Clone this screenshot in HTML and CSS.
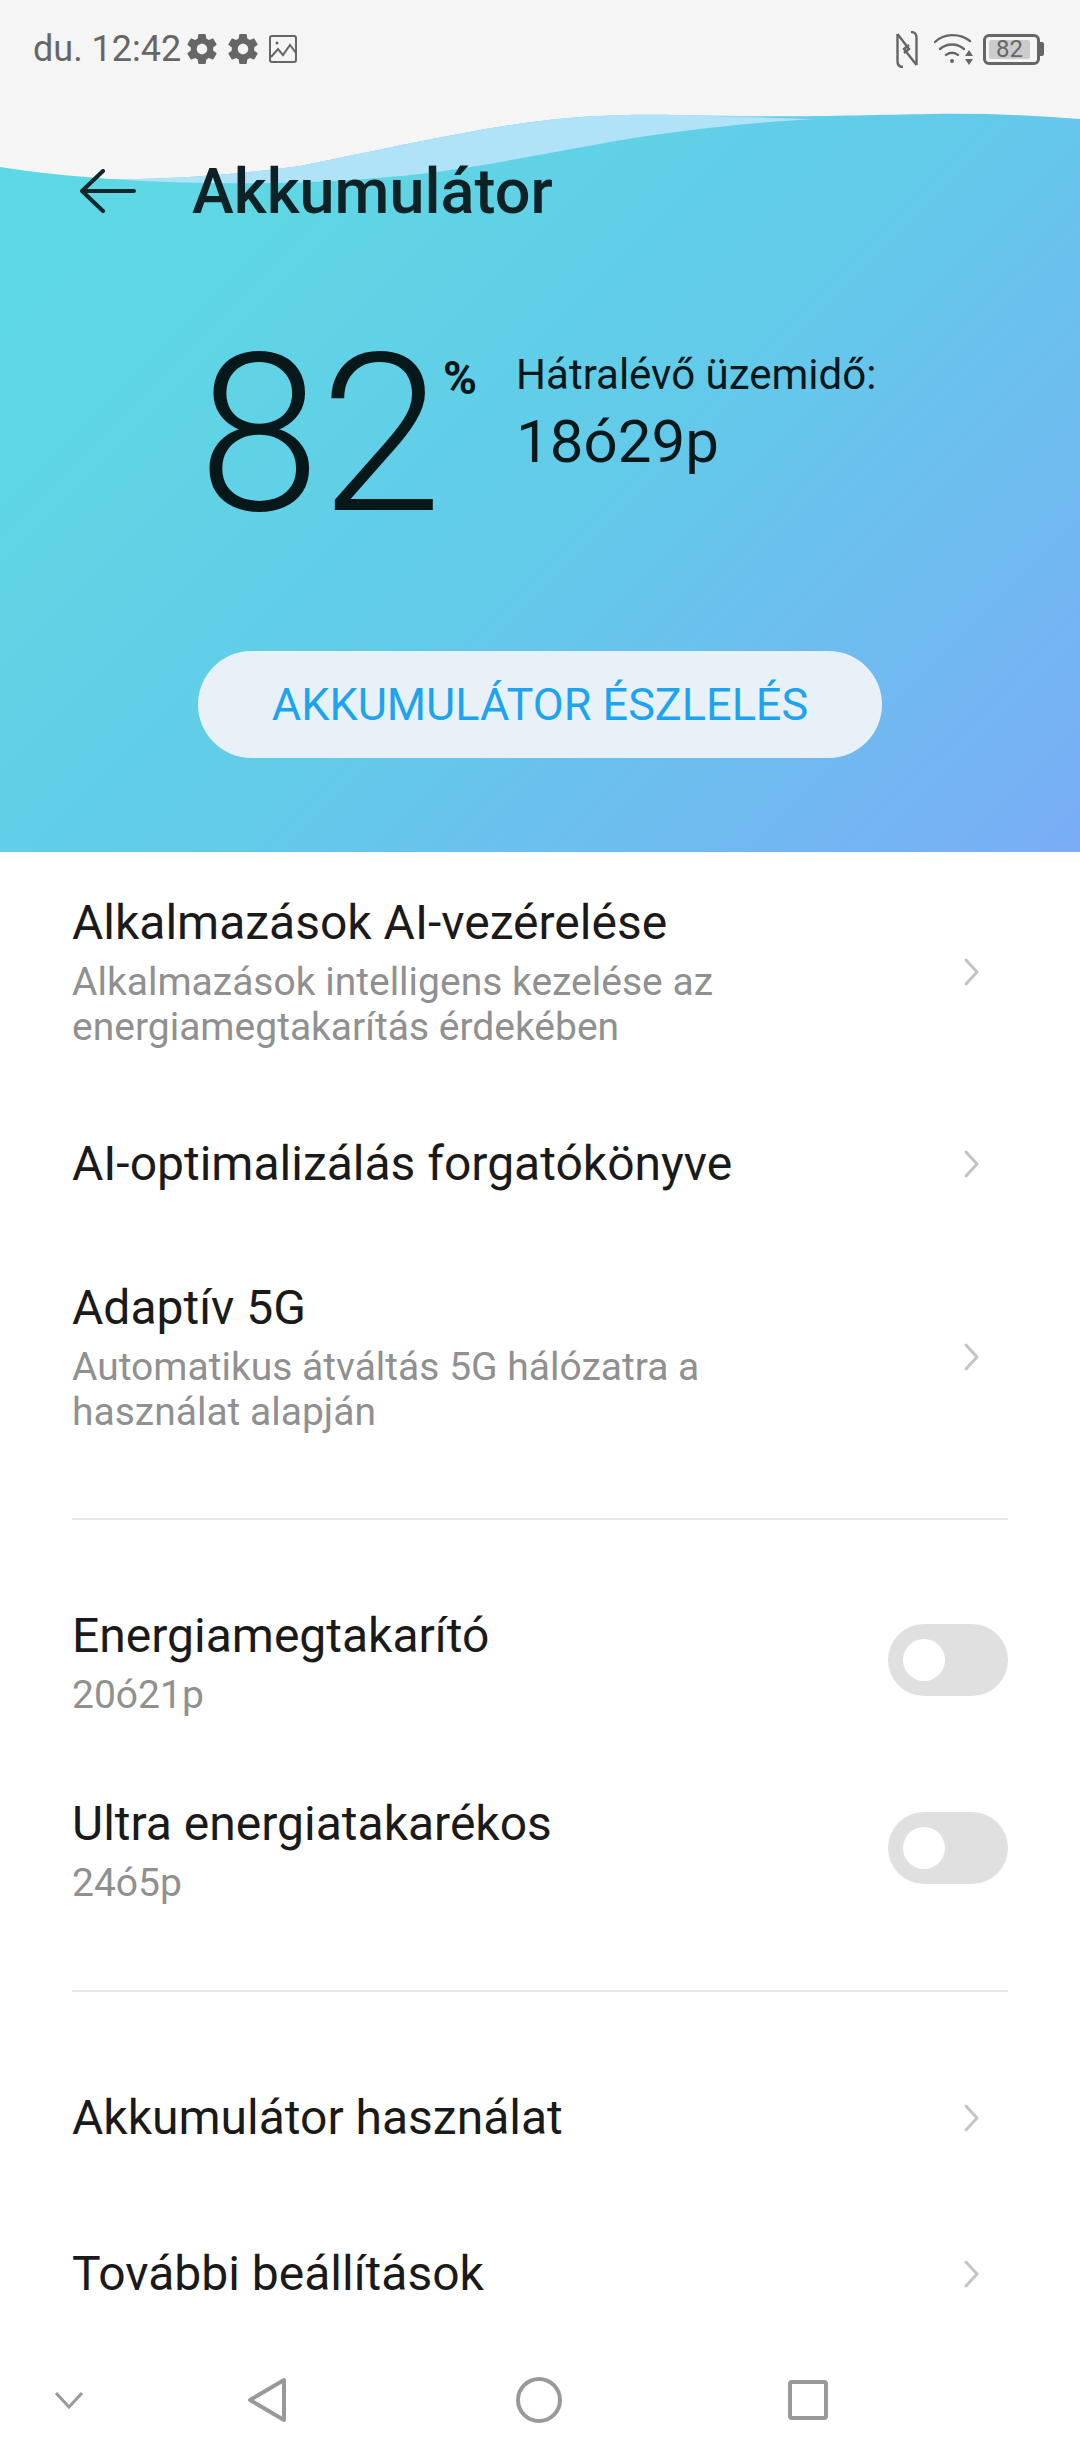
FILE: index.html
```html
<!DOCTYPE html>
<html lang="en">
<head>
    <meta charset="UTF-8">
    <title>Akkumulátor</title>
    <link rel="stylesheet" href="styles.css">
</head>
<body>
    <svg class="defs" width="0" height="0">
        <symbol id="gear" viewBox="0 0 24 24">
            <path d="M19.43 12.98c.04-.32.07-.64.07-.98s-.03-.66-.07-.98l2.11-1.65c.19-.15.24-.42.12-.64l-2-3.46c-.12-.22-.39-.3-.61-.22l-2.49 1c-.52-.4-1.08-.73-1.69-.98l-.38-2.65C14.46 2.18 14.25 2 14 2h-4c-.25 0-.46.18-.49.42l-.38 2.65c-.61.25-1.17.59-1.69.98l-2.49-1c-.23-.09-.49 0-.61.22l-2 3.46c-.13.22-.07.49.12.64l2.11 1.65c-.04.32-.07.65-.07.98s.03.66.07.98l-2.11 1.65c-.19.15-.24.42-.12.64l2 3.46c.12.22.39.3.61.22l2.49-1c.52.4 1.08.73 1.69.98l.38 2.65c.03.24.24.42.49.42h4c.25 0 .46-.18.49-.42l.38-2.65c.61-.25 1.17-.59 1.69-.98l2.49 1c.23.09.49 0 .61-.22l2-3.46c.12-.22.07-.49-.12-.64l-2.11-1.65zM12 15.5c-1.93 0-3.5-1.57-3.5-3.5s1.57-3.5 3.5-3.5 3.5 1.57 3.5 3.5-1.57 3.5-3.5 3.5z"/>
        </symbol>
        <symbol id="chevron" viewBox="0 0 18 30">
            <path d="M3 3l11 12L3 27" fill="none" stroke="#c4c4c4" stroke-width="3" stroke-linecap="round" stroke-linejoin="round"/>
        </symbol>
    </svg>

    <div class="page">
        <section class="hero">
            <svg class="wave" viewBox="0 0 1080 852" width="1080" height="852">
                <path fill="#f5f5f5" d="M0 0H1080V119C1030 115 980 113 930 114C860 115 790 118 680 115C620 114 580 116 540 121C480 128 400 146 300 166C240 174 170 180 110 179C70 176 30 172 0 167Z"/>
                <path fill="#b0e2f8" d="M110 179C170 180 240 174 300 166C400 146 480 128 540 121C580 116 620 114 680 115C730 116 770 118 815 119C760 122 710 127 640 137C590 145 500 163 450 170C370 182 240 188 110 179Z"/>
            </svg>

            <div class="status-bar">
                <span class="clock">du. 12:42</span>
                <svg class="gear" width="36" height="36"><use href="#gear"/></svg>
                <svg class="gear" width="36" height="36"><use href="#gear"/></svg>
                <svg class="pic" width="28" height="28" viewBox="0 0 28 28" fill="none" stroke="#666" stroke-width="2">
                    <rect x="1" y="1" width="26" height="26" rx="2"/>
                    <path d="M2 22l7-8 5 6 7-10 6 8"/>
                    <circle cx="8" cy="8" r="1.5" fill="#666" stroke="none"/>
                </svg>
                <span class="spacer"></span>
                <svg class="nfc" width="22" height="37" viewBox="0 0 22 37" fill="none" stroke="#666" stroke-width="2.4">
                    <path d="M1.5 3V30C1.5 34 3 36 7 36"/>
                    <path d="M1.5 3L13 18L8 22"/>
                    <path d="M20.500 34V7C20.500 3 19 1 15 1"/>
                    <path d="M20.500 34L8 18L13 14"/>
                </svg>
                <svg class="wifi" width="40" height="32" viewBox="0 0 40 32" fill="none" stroke="#666" stroke-width="2.4" stroke-linecap="round">
                    <path d="M1 9C10 0 26 0 36 8"/>
                    <path d="M6 16C13 10 23 10 30 16"/>
                    <path d="M12 22C15 19 21 19 24 22"/>
                    <circle cx="18" cy="28" r="2" fill="#666" stroke="none"/>
                    <path d="M35 17l4 6h-8zM35 32l4-6h-8z" fill="#666" stroke="none"/>
                </svg>
                <div class="battery">
                    <div class="battery-level">82</div>
                </div>
                <div class="battery-tip"></div>
            </div>

            <header class="title-row">
                <svg class="back" width="56" height="44" viewBox="0 0 56 44" fill="none" stroke="#10272c" stroke-width="4" stroke-linecap="round" stroke-linejoin="round">
                    <path d="M54 22H2M23 2L2 22l21 20"/>
                </svg>
                <h1 class="title">Akkumulátor</h1>
            </header>

            <div class="summary">
                <div class="level">82</div>
                <div class="percent">%</div>
                <div class="remaining">
                    <div class="remaining-label">Hátralévő üzemidő:</div>
                    <div class="remaining-value">18ó29p</div>
                </div>
            </div>

            <button class="detect">AKKUMULÁTOR ÉSZLELÉS</button>
        </section>

        <main class="list">
            <div class="row">
                <div class="row-text">
                    <div class="row-title">Alkalmazások AI-vezérelése</div>
                    <div class="row-sub">Alkalmazások intelligens kezelése az<br>energiamegtakarítás érdekében</div>
                </div>
                <svg class="chevron" width="18" height="30"><use href="#chevron"/></svg>
            </div>
            <div class="row">
                <div class="row-text">
                    <div class="row-title">AI-optimalizálás forgatókönyve</div>
                </div>
                <svg class="chevron" width="18" height="30"><use href="#chevron"/></svg>
            </div>
            <div class="row">
                <div class="row-text">
                    <div class="row-title">Adaptív 5G</div>
                    <div class="row-sub">Automatikus átváltás 5G hálózatra a<br>használat alapján</div>
                </div>
                <svg class="chevron" width="18" height="30"><use href="#chevron"/></svg>
            </div>

            <hr class="divider">

            <div class="row row-switch">
                <div class="row-text">
                    <div class="row-title">Energiamegtakarító</div>
                    <div class="row-sub">20ó21p</div>
                </div>
                <div class="switch"><div class="knob"></div></div>
            </div>
            <div class="row row-switch">
                <div class="row-text">
                    <div class="row-title">Ultra energiatakarékos</div>
                    <div class="row-sub">24ó5p</div>
                </div>
                <div class="switch"><div class="knob"></div></div>
            </div>

            <hr class="divider divider-after-switch">

            <div class="row row-link">
                <div class="row-text">
                    <div class="row-title">Akkumulátor használat</div>
                </div>
                <svg class="chevron" width="18" height="30"><use href="#chevron"/></svg>
            </div>
            <div class="row row-link">
                <div class="row-text">
                    <div class="row-title">További beállítások</div>
                </div>
                <svg class="chevron" width="18" height="30"><use href="#chevron"/></svg>
            </div>
        </main>

        <nav class="nav">
            <svg class="nav-hide" width="30" height="18" viewBox="0 0 30 18" fill="none" stroke="#999" stroke-width="3">
                <path d="M2 2l13 14L28 2"/>
            </svg>
            <svg class="nav-back" width="40" height="46" viewBox="0 0 40 46" fill="none" stroke="#999" stroke-width="4" stroke-linejoin="round">
                <path d="M37 3V43L3 23Z"/>
            </svg>
            <svg class="nav-home" width="46" height="46" viewBox="0 0 46 46" fill="none" stroke="#999" stroke-width="4">
                <circle cx="23" cy="23" r="21"/>
            </svg>
            <svg class="nav-recent" width="40" height="40" viewBox="0 0 40 40" fill="none" stroke="#999" stroke-width="4" stroke-linejoin="round">
                <rect x="2" y="2" width="36" height="36" rx="2"/>
            </svg>
        </nav>
    </div>
</body>
</html>
```

FILE: styles.css
```css
* {
    box-sizing: border-box;
}

body {
    margin: 0;
    background: #fff;
    font-family: Roboto, sans-serif;
    color: #1a1a1a;
}

.defs {
    position: absolute;
}

.page {
    width: 1080px;
    height: 2460px;
    display: flex;
    flex-direction: column;
    overflow: hidden;
}

/* top blue area */
.hero {
    position: relative;
    height: 852px;
    flex-shrink: 0;
    background: linear-gradient(135deg, #5dd9e6 0%, #5fd6e4 25%, #62cbe9 55%, #7aadf6 100%);
    display: flex;
    flex-direction: column;
}

.wave {
    position: absolute;
    top: 0;
    left: 0;
}

.status-bar {
    position: relative;
    height: 98px;
    padding: 0 36px 0 33px;
    display: flex;
    align-items: center;
    color: #666;
}

.clock {
    font-size: 36px;
    margin-right: 3px;
}

.gear {
    fill: #666;
    margin-right: 5px;
}

.pic {
    margin-left: 3px;
}

.spacer {
    flex: 1;
}

.nfc {
    margin-right: 16px;
}

.wifi {
    margin-right: 9px;
}

.battery {
    width: 57px;
    height: 31px;
    border: 3px solid #666;
    border-radius: 6px;
    padding: 3px;
}

.battery-level {
    width: 41px;
    height: 19px;
    background: #ccc;
    border-radius: 2px;
    font-size: 24px;
    line-height: 19px;
    text-align: center;
}

.battery-tip {
    width: 4px;
    height: 14px;
    background: #666;
    border-radius: 0 2px 2px 0;
}

.title-row {
    position: relative;
    display: flex;
    align-items: center;
    margin-top: 45px;
    padding: 0 0 0 80px;
    height: 96px;
}

.title {
    margin: 0 0 0 56px;
    font-size: 63px;
    font-weight: 500;
    color: #0e2226;
}

.summary {
    position: relative;
    display: flex;
    align-items: flex-start;
    padding: 112px 0 0 198px;
    height: 412px;
    color: #07181b;
}

.level {
    font-size: 220px;
    font-weight: 300;
    line-height: 220px;
    margin-top: -26px;
}

.percent {
    font-size: 46px;
    font-weight: 700;
    margin: 0 0 0 1px;
    line-height: 54px;
}

.remaining {
    margin-left: 39px;
}

.remaining-label {
    font-size: 42px;
    line-height: 48px;
}

.remaining-value {
    font-size: 60px;
    line-height: 86px;
}

.detect {
    position: relative;
    align-self: center;
    width: 684px;
    height: 107px;
    border: none;
    border-radius: 54px;
    background: #e7f1f7;
    color: #1da4f0;
    font-family: Roboto, sans-serif;
    font-size: 45px;
}

/* settings rows */
.list {
    padding: 0 72px;
}

.row {
    display: flex;
    align-items: center;
    justify-content: space-between;
    padding: 41px 0 43px;
}

.row-switch {
    padding: 0 0 76px;
}

.row-link {
    padding: 0 0 96px;
}

.row-title {
    font-size: 48px;
    line-height: 60px;
}

.row-sub {
    margin-top: 7px;
    font-size: 39px;
    line-height: 45px;
    color: #909090;
}

.chevron {
    margin-right: 27px;
}

.divider {
    margin: 40px 0 86px;
    border: none;
    height: 2px;
    background: #e8e8e8;
}

.divider-after-switch {
    margin: 8px 0 96px;
}

.switch {
    width: 120px;
    height: 72px;
    margin-top: -4px;
    border-radius: 36px;
    background: #e0e0e0;
    padding: 15px;
}

.knob {
    width: 42px;
    height: 42px;
    border-radius: 50%;
    background: #fff;
}

.nav {
    position: absolute;
    top: 2377px;
    left: 0;
    width: 1080px;
    height: 46px;
    display: flex;
    align-items: center;
    padding-left: 54px;
    background: #fff;
}

.nav-back {
    margin-left: 163px;
}

.nav-home {
    margin-left: 229px;
}

.nav-recent {
    margin-left: 226px;
}
```
